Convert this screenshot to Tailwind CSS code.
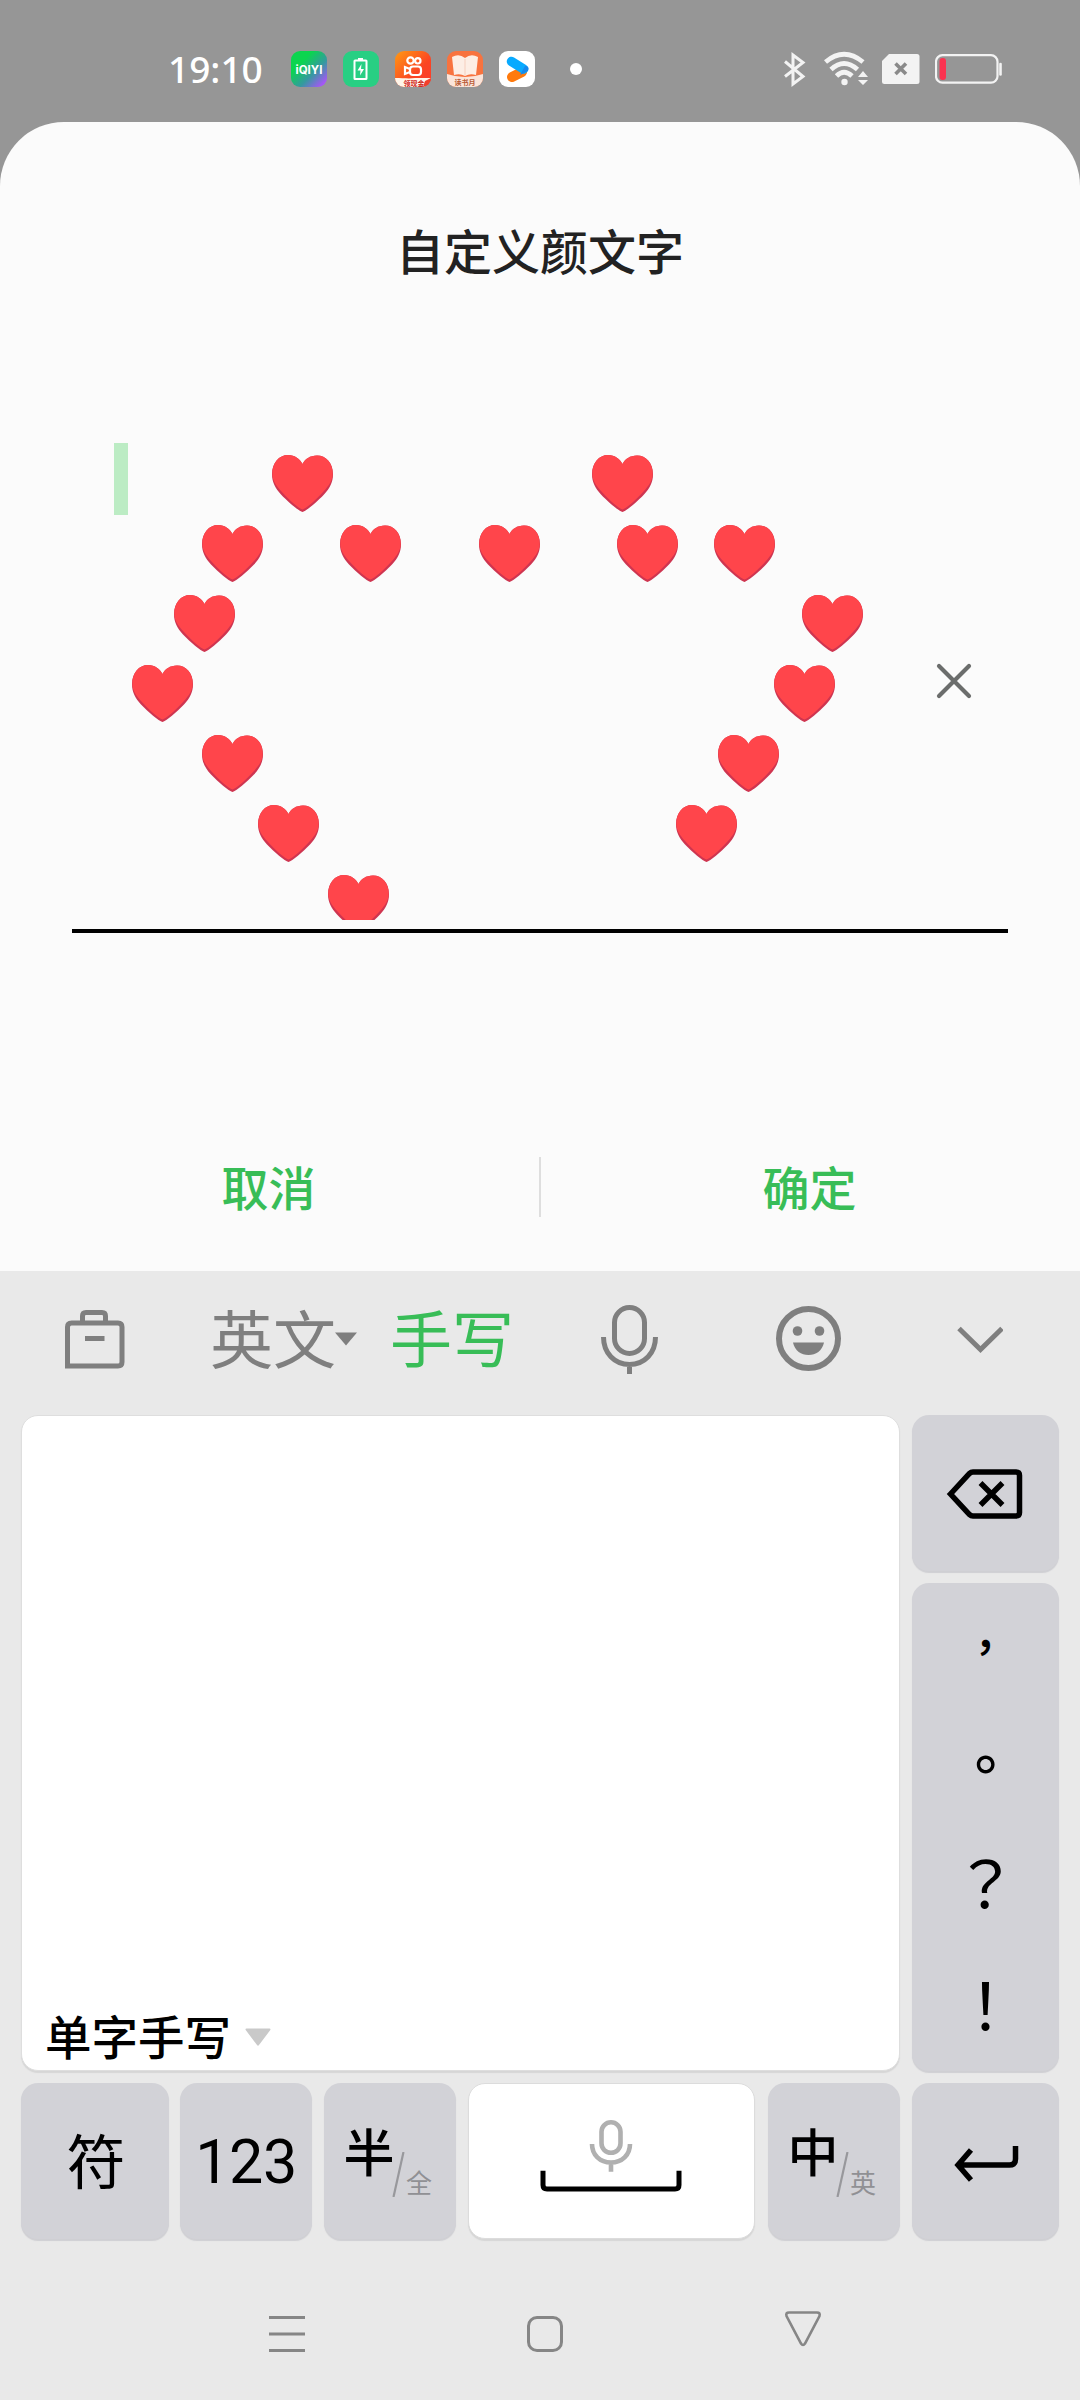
<!DOCTYPE html>
<html lang="zh-CN">
<head>
<meta charset="utf-8">
<title>自定义颜文字</title>
<script src="https://cdn.jsdelivr.net/npm/@tailwindcss/browser@4"></script>
</head>
<body class="w-[1080px] h-[2400px] overflow-hidden bg-[#969696] font-['Noto_Sans_CJK_SC',sans-serif] flex flex-col">
<svg class="hidden">
  <symbol id="heart" viewBox="0 0 61 57">
    <path fill="#cf3550" d="M30.500 57C27 56 16 47 9 39.500C3 33 0 27 0 19C0 8 7 0 16 0C23 0 28 4 30.500 9C33 4 38 .5 45 .5C54 .5 61 8 61 19C61 27 58 33 52 39.500C45 47 34 56 30.500 57Z"/>
    <path fill="#ff454b" d="M30.500 54.500C27 53.500 16.500 44.500 9.500 36.500C3.500 30 .3 25 .3 18.500C.3 8 7 0 16 0C23 0 28 4 30.500 9C33 4 38 .5 45 .5C54 .5 60.700 8 60.700 18.500C60.700 25 57.500 30 51.500 36.500C44.500 44.500 34 53.500 30.500 54.500Z"/>
  </symbol>
</svg>

<!-- status bar -->
<header class="h-[122px] shrink-0 flex items-start pt-[51px] text-white">
  <div class="ml-[168px] w-[123px] h-9 flex items-center font-['Noto_Sans'] font-medium text-[37px] leading-none"><span class="-mt-0.5">19:10</span></div>
  <div class="flex gap-4">
    <svg class="size-9" viewBox="0 0 36 36"><defs><linearGradient id="g1" x1="0" y1="0" x2="1" y2="1"><stop offset=".3" stop-color="#0bd54f"/><stop offset=".62" stop-color="#3599a0"/><stop offset=".9" stop-color="#a457f5"/></linearGradient></defs><rect width="36" height="36" rx="9" fill="url(#g1)"/><text x="18" y="22.500" text-anchor="middle" textLength="27" font-family="Inter" font-weight="700" font-size="11.500" fill="#fff">iQIYI</text></svg>
    <svg class="size-9" viewBox="0 0 36 36"><rect width="36" height="36" rx="9" fill="#28cf83"/><rect x="11.500" y="9.500" width="12" height="18.500" rx=".5" fill="none" stroke="#fff" stroke-width="2"/><path d="M15 7h5v3h-5zM18.500 13l-4 6.500h3l-.5 5 4-6.500h-3z" fill="#fff"/></svg>
    <svg class="size-9" viewBox="0 0 36 36"><defs><linearGradient id="g2" x1="0" y1="0" x2="1" y2="1"><stop stop-color="#ff9a13"/><stop offset=".6" stop-color="#fb4523"/><stop offset="1" stop-color="#fb3c2c"/></linearGradient><clipPath id="c2"><rect width="36" height="36" rx="9"/></clipPath></defs><g clip-path="url(#c2)"><rect width="36" height="36" fill="url(#g2)"/><path d="M0 27c8 0 14 1 20 0h16l-6 9H0z" fill="#fff5ea"/><g fill="none" stroke="#fff" stroke-width="2.200"><circle cx="15.500" cy="9.500" r="3.200"/><circle cx="22.800" cy="9.800" r="2.700"/><rect x="15" y="15.500" width="11" height="8.500" rx="3"/><path d="M15 18l-5-2v7l5-2"/></g><text x="19" y="34.500" text-anchor="middle" font-size="7" font-weight="700" fill="#d01f18">领现金</text><path d="M30 30l6-3v9h-8z" fill="#f2402b"/></g></svg>
    <svg class="size-9" viewBox="0 0 36 36"><defs><clipPath id="c3"><rect width="36" height="36" rx="9"/></clipPath></defs><g clip-path="url(#c3)"><rect width="36" height="36" fill="#f8733f"/><path d="M5 6q7-4 13 1 6-5 13-1l-2 18q-6-2-11 1-5-3-11-1z" fill="#fdeee5"/><path d="M18 8v17" stroke="#f6cfbe"/><path d="M0 23q18 6 36 0v13H0z" fill="#fbe5da"/><text x="18" y="33.500" text-anchor="middle" font-size="7" font-weight="700" fill="#b85a35">读书月</text></g></svg>
    <svg class="size-9" viewBox="0 0 36 36"><rect width="36" height="36" rx="9" fill="#fff"/><path d="M13 26l10-5" stroke="#ff7a0d" stroke-width="10" stroke-linecap="round"/><path d="M12.500 10.500l12 7.500" stroke="#08aaff" stroke-width="9.500" stroke-linecap="round"/><path d="M21 24l8-4q2-5-3-5z" fill="#1688ec"/></svg>
  </div>
  <div class="ml-[35px] mt-3 size-3 rounded-full bg-white"></div>
  <svg class="ml-[202px] w-[22px] h-9" viewBox="0 0 22 36" fill="none" stroke="#f3f3f3" stroke-width="3"><path d="M1 10.500l18 15-10 7.500V4l10 7.500L1 25.500"/></svg>
  <svg class="ml-[18px] w-[46px] h-9" viewBox="0 0 46 36" fill="none" stroke="#f3f3f3" stroke-width="4.800"><path d="M1.500 11Q20-4.500 39 11M7 18.500Q20 6.500 33.500 18.500M12.500 25Q20 17.500 28 25"/><circle cx="20.500" cy="31" r="3.200" fill="#f3f3f3" stroke="none"/><path d="M39 20l5 6H34zM39 34l5-5H34z" fill="#f3f3f3" stroke="none"/></svg>
  <svg class="ml-[12px] w-[38px] h-9" viewBox="0 0 38 36"><path d="M7 3H35q2.500 0 2.500 2.500V30.500q0 2.500-2.500 2.500H2.500Q0 33 0 30.500V10z" fill="#f3f3f3"/><path d="M13.500 12.500l10.500 10.500M24 12.500L13.500 23" stroke="#8a8a8a" stroke-width="3.600"/></svg>
  <svg class="ml-[15px] w-[68px] h-9" viewBox="0 0 68 36"><rect x="1" y="4.200" width="61.500" height="27.500" rx="6.500" fill="none" stroke="#f3f3f3" stroke-width="2.200"/><rect x="4.500" y="7" width="6.500" height="22" rx="3" fill="#fa3350"/><path d="M65.500 13v10.500" stroke="#f3f3f3" stroke-width="2.600" stroke-linecap="round"/></svg>
</header>

<!-- dialog sheet -->
<main class="h-[1149px] shrink-0 bg-[#fbfbfb] rounded-t-[64px] flex flex-col">
  <h1 class="mt-[91px] h-[72px] text-center font-medium text-[48px] leading-[72px] text-[#222]">自定义颜文字</h1>
  <section class="mx-[72px] mt-[158px] h-[490px] flex border-b-4 border-black">
    <div class="relative w-[840px] h-[477px] overflow-hidden">
      <div class="absolute left-[42px] top-0 w-3.5 h-[72px] bg-[#bcecc4]"></div>
      <div class="flex flex-col pt-3">
        <div class="h-[70px] flex pl-[200px] gap-[259px]"><svg class="w-[61px] h-[57px] shrink-0"><use href="#heart"/></svg><svg class="w-[61px] h-[57px] shrink-0"><use href="#heart"/></svg></div>
        <div class="h-[70px] flex pl-[130px]"><svg class="w-[61px] h-[57px]"><use href="#heart"/></svg><svg class="ml-[77px] w-[61px] h-[57px]"><use href="#heart"/></svg><svg class="ml-[78px] w-[61px] h-[57px]"><use href="#heart"/></svg><svg class="ml-[77px] w-[61px] h-[57px]"><use href="#heart"/></svg><svg class="ml-[36px] w-[61px] h-[57px]"><use href="#heart"/></svg></div>
        <div class="h-[70px] flex pl-[102px] gap-[567px]"><svg class="w-[61px] h-[57px] shrink-0"><use href="#heart"/></svg><svg class="w-[61px] h-[57px] shrink-0"><use href="#heart"/></svg></div>
        <div class="h-[70px] flex pl-[60px] gap-[581px]"><svg class="w-[61px] h-[57px] shrink-0"><use href="#heart"/></svg><svg class="w-[61px] h-[57px] shrink-0"><use href="#heart"/></svg></div>
        <div class="h-[70px] flex pl-[130px] gap-[455px]"><svg class="w-[61px] h-[57px] shrink-0"><use href="#heart"/></svg><svg class="w-[61px] h-[57px] shrink-0"><use href="#heart"/></svg></div>
        <div class="h-[70px] flex pl-[186px] gap-[357px]"><svg class="w-[61px] h-[57px] shrink-0"><use href="#heart"/></svg><svg class="w-[61px] h-[57px] shrink-0"><use href="#heart"/></svg></div>
        <div class="h-[70px] flex pl-[256px]"><svg class="w-[61px] h-[57px] shrink-0"><use href="#heart"/></svg></div>
      </div>
    </div>
    <svg class="ml-[24px] mt-[220px] size-9" viewBox="0 0 36 36"><path d="M3 3l30 30M33 3L3 33" stroke="#6b6d6c" stroke-width="4.200" stroke-linecap="round"/></svg>
  </section>
  <div class="mt-[224px] h-[60px] flex items-start font-medium text-[47px] leading-[58px] text-[#38bd57]">
    <button class="w-[539px] pr-0.5 text-center">取消</button>
    <div class="w-0.5 h-[60px] bg-[#dedede]"></div>
    <button class="w-[539px] pr-0.5 text-center">确定</button>
  </div>
</main>

<!-- keyboard -->
<section class="h-[1129px] shrink-0 bg-[#e9e9e9] flex flex-col">
  <div class="h-[144px] shrink-0 flex items-start pt-[29px] text-[#7f7f7f]">
    <svg class="ml-[60px] mt-[5px] w-[70px] h-[70px]" viewBox="0 0 70 70" fill="none" stroke="currentColor" stroke-width="5"><path d="M7.500 61V22q0-4 4-4H58q4 0 4 4V57q0 4-4 4zM22.500 18V11q0-3.500 3.500-3.500H42q3.500 0 3.500 3.500v7M25 33.500h19.500"/></svg>
    <div class="ml-[80px] w-[125px] h-20 text-[63px] leading-[71px] whitespace-nowrap">英文</div>
    <svg class="mt-[32px] w-[22px] h-[14px]" viewBox="0 0 22 14"><path d="M0 .5h22L11 13.500z" fill="currentColor"/></svg>
    <div class="ml-[33px] w-[122px] h-20 text-[62px] leading-[73px] whitespace-nowrap text-[#38bd57]">手写</div>
    <svg class="ml-[89px] mt-[5px] w-[58px] h-[70px]" viewBox="0 0 58 70" fill="none" stroke="currentColor" stroke-width="5"><rect x="13.500" y="2.500" width="30" height="46" rx="15"/><path d="M2.500 32c0 16 11 27.500 26 27.500s26-11.500 26-27.500M28.500 59v10"/></svg>
    <svg class="ml-[117px] mt-[6px] size-[66px]" viewBox="0 0 66 66"><circle cx="32.500" cy="32.500" r="29.500" fill="none" stroke="currentColor" stroke-width="6"/><circle cx="21.500" cy="25" r="4.800" fill="currentColor"/><circle cx="43.500" cy="25" r="4.800" fill="currentColor"/><path d="M17 36.500h31C46 45 40 49 32.500 49S19 45 17 36.500z" fill="currentColor"/></svg>
    <svg class="ml-[115px] mt-[26px] w-[46px] h-[28px]" viewBox="0 0 46 28" fill="none" stroke="currentColor" stroke-width="5"><path d="M2 2.500l21.500 21L45 2.500"/></svg>
  </div>

  <div class="h-[656px] flex px-[21px] gap-[12px]">
    <div class="w-[879px] h-[656px] rounded-[17px] bg-white border border-[#dedede] shadow-[0_2px_1px_#d6d6d6] flex items-end">
      <div class="ml-[23px] mb-[5px] h-[60px] flex items-center text-[46.500px] leading-[60px] font-medium text-black">单字手写<svg class="ml-[14px] mt-[4px] w-[26px] h-[18px]" viewBox="0 0 26 18"><path d="M1.500.5h23q1.500 0 .8 1.500L14 17q-1 1.500-2 0L.7 2Q0 .5 1.500.5z" fill="#c9c9c9"/></svg></div>
    </div>
    <div class="w-[147px] flex flex-col gap-3 text-black">
      <div class="h-[156px] rounded-[17px] bg-[#d2d2d7] shadow-[0_2px_1px_#cfcfd3] flex items-center justify-center pr-[2px] pt-px">
        <svg class="w-[78px] h-[54px]" viewBox="0 0 78 54" fill="none" stroke="#000" stroke-width="5.500"><path d="M4.500 27L23.500 6.500Q25 5 27 5H70q3.500 0 3.500 3.500v37q0 3.500-3.500 3.500H27q-2 0-3.500-1.500z"/><path d="M34.500 16l22 22M56.500 16l-22 22"/></svg>
      </div>
      <div class="h-[488px] rounded-[17px] bg-[#d2d2d7] shadow-[0_2px_1px_#cfcfd3] grid grid-rows-4 text-center text-[64px] leading-[106px] font-['Noto_Sans_CJK_TC',sans-serif]" lang="zh-TW">
        <div class="text-[45px] leading-[124px] font-medium">，</div><div class="text-[57px] leading-[112px] font-medium">。</div><div>？</div><div>！</div>
      </div>
    </div>
  </div>

  <div class="mt-3 h-[156px] flex px-[21px] text-black">
    <div class="w-[148px] rounded-[17px] bg-[#d2d2d7] shadow-[0_2px_1px_#cfcfd3] text-center text-[59px] leading-[152px] pl-0.5">符</div>
    <div class="ml-[11px] w-[132px] rounded-[17px] bg-[#d2d2d7] shadow-[0_2px_1px_#cfcfd3] text-center font-['Roboto'] text-[61px] leading-[159px] tracking-[-0.5px]">123</div>
    <div class="ml-3 w-[132px] rounded-[17px] bg-[#d2d2d7] shadow-[0_2px_1px_#cfcfd3] flex items-start pl-[22px]">
      <span class="mt-[37px] w-[46px] text-[51px] leading-[60px] font-medium flex justify-center">半</span>
      <svg class="mt-[69px] w-[13px] h-[45px]" viewBox="0 0 13 45"><path d="M11.500 0L1.500 45" stroke="#98989c" stroke-width="2.200"/></svg>
      <span class="mt-[84px] ml-[1px] text-[26px] leading-[30px] text-[#909094]">全</span>
    </div>
    <div class="ml-3 w-[287px] rounded-[17px] bg-white border border-[#dcdcdc] shadow-[0_2px_1px_#d6d6d6] flex items-start justify-center">
      <svg class="mt-[34px] w-[144px] h-[76px]" viewBox="0 0 144 76" fill="none"><g stroke="#b0b0b0" stroke-width="4.600"><rect x="61.500" y="4.300" width="19" height="30.500" rx="9.500"/><path d="M52 26c0 11 8 18.500 19 18.500s19-7.500 19-18.500M71 44v9.700"/></g><path d="M3 52.700v14.300q0 4 4 4H135q4 0 4-4V52.700" stroke="#000" stroke-width="5"/></svg>
    </div>
    <div class="ml-[13px] w-[132px] rounded-[17px] bg-[#d2d2d7] shadow-[0_2px_1px_#cfcfd3] flex items-start pl-[22px]">
      <span class="mt-[37px] w-[46px] text-[51px] leading-[60px] font-medium flex justify-center">中</span>
      <svg class="mt-[69px] w-[13px] h-[45px]" viewBox="0 0 13 45"><path d="M11.500 0L1.500 45" stroke="#98989c" stroke-width="2.200"/></svg>
      <span class="mt-[84px] ml-[1px] text-[26px] leading-[30px] text-[#909094]">英</span>
    </div>
    <div class="ml-3 w-[147px] rounded-[17px] bg-[#d2d2d7] shadow-[0_2px_1px_#cfcfd3] flex items-start justify-center">
      <svg class="mt-[60px] w-[70px] h-[44px]" viewBox="0 0 70 44" fill="none" stroke="#000" stroke-width="5.500"><path d="M64.500 3v13q0 6-6 6H7M20 7L7 22l13 15"/></svg>
    </div>
  </div>

  <!-- system navigation -->
  <nav class="mt-[67px] flex items-start text-[#868686]">
    <svg class="ml-[267px] mt-[8px] w-10 h-10" viewBox="0 0 40 40"><path d="M2 3.500h36M2 20h36M2 36.500h36" stroke="currentColor" stroke-width="3.200"/></svg>
    <svg class="ml-[218px] mt-[8px] w-10 h-10" viewBox="0 0 40 40"><rect x="3.500" y="3.500" width="33" height="33" rx="8.500" fill="none" stroke="currentColor" stroke-width="3"/></svg>
    <svg class="ml-[218px] mt-[3px] w-10 h-10" viewBox="0 0 40 40"><path d="M6 3.500H34q3.500 0 2.500 3.500L22 34.500q-2 3-4 0L3.500 7Q2.500 3.500 6 3.500z" fill="none" stroke="currentColor" stroke-width="2.600"/></svg>
  </nav>
</section>
</body>
</html>
